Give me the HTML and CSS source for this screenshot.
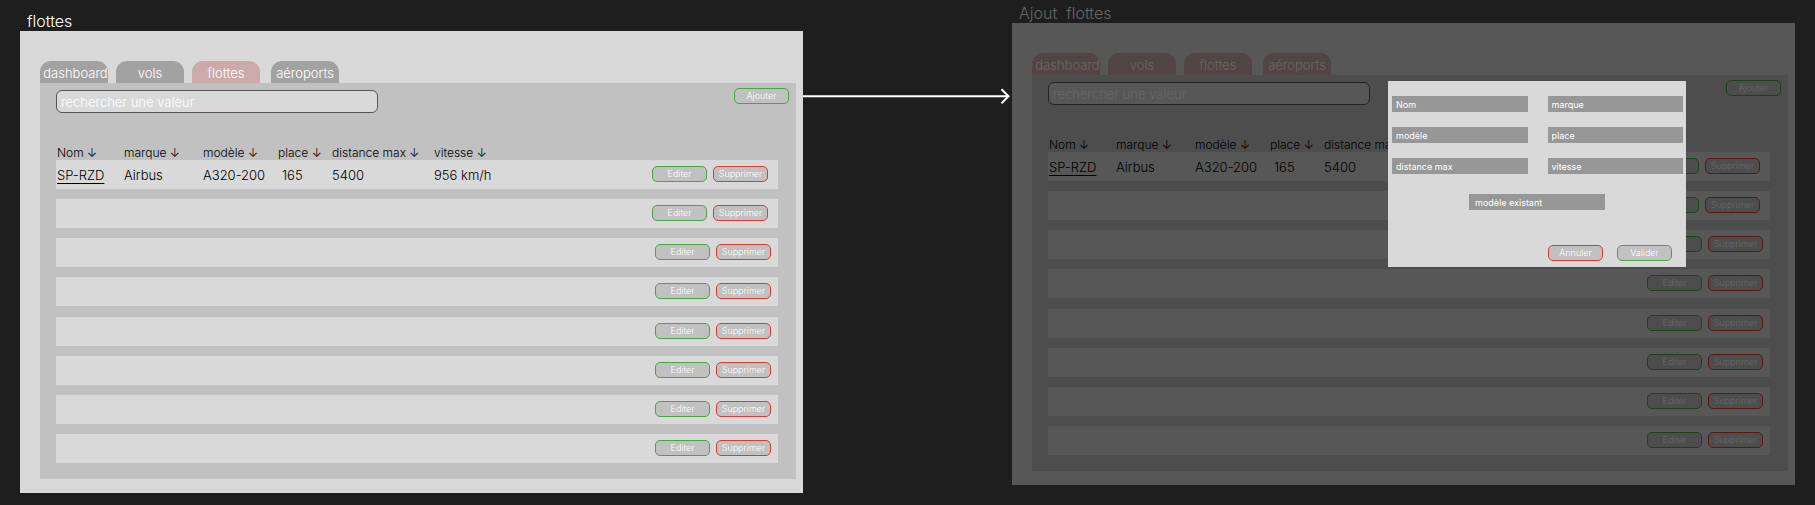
FILE: index.html
```html
<!DOCTYPE html>
<html lang="fr">
<head>
<meta charset="utf-8">
<title>Flottes</title>
<link rel="stylesheet" href="styles.css">
</head>
<body>
<main class="board">
  <section class="screen">
    <h2 class="screen-title">flottes</h2>
    <div class="frame">
      <nav class="tabs">
        <button class="tab tab-wide">dashboard</button>
        <button class="tab">vols</button>
        <button class="tab tab-active">flottes</button>
        <button class="tab tab-last">aéroports</button>
      </nav>
      <div class="panel">
        <div class="toolbar">
          <input class="search" type="search" placeholder="rechercher une valeur" aria-label="rechercher une valeur">
          <button class="btn btn-green">Ajouter</button>
        </div>
        <table class="fleet">
          <colgroup><col class="c-nom"><col class="c-marque"><col class="c-modele"><col class="c-place"><col class="c-distance"><col><col class="c-actions"></colgroup>
          <thead><tr><th>Nom ↓</th><th>marque ↓</th><th>modèle ↓</th><th>place ↓</th><th>distance max ↓</th><th>vitesse ↓</th><th></th></tr></thead>
          <tbody>
            <tr class="inset"><td><a class="plane" href="#">SP-RZD</a></td><td>Airbus</td><td>A320-200</td><td class="center">165</td><td>5400</td><td>956 km/h</td><td><div class="actions"><button class="btn btn-green">Editer</button><button class="btn btn-red">Supprimer</button></div></td></tr>
            <tr class="inset"><td colspan="6"></td><td><div class="actions"><button class="btn btn-green">Editer</button><button class="btn btn-red">Supprimer</button></div></td></tr>
            <tr><td colspan="6"></td><td><div class="actions"><button class="btn btn-green">Editer</button><button class="btn btn-red">Supprimer</button></div></td></tr>
            <tr><td colspan="6"></td><td><div class="actions"><button class="btn btn-green">Editer</button><button class="btn btn-red">Supprimer</button></div></td></tr>
          </tbody>
          <tbody>
            <tr><td colspan="6"></td><td><div class="actions"><button class="btn btn-green">Editer</button><button class="btn btn-red">Supprimer</button></div></td></tr>
            <tr><td colspan="6"></td><td><div class="actions"><button class="btn btn-green">Editer</button><button class="btn btn-red">Supprimer</button></div></td></tr>
            <tr><td colspan="6"></td><td><div class="actions"><button class="btn btn-green">Editer</button><button class="btn btn-red">Supprimer</button></div></td></tr>
            <tr><td colspan="6"></td><td><div class="actions"><button class="btn btn-green">Editer</button><button class="btn btn-red">Supprimer</button></div></td></tr>
          </tbody>
        </table>
      </div>
    </div>
  </section>

  <svg class="connector" width="209" height="16" viewBox="0 0 209 16" aria-hidden="true">
    <path d="M0 8.300H205M198.500 1.300L205.500 8.300L198.500 15.300" fill="none" stroke="#fff" stroke-width="2"/>
  </svg>

  <section class="screen screen-raised">
    <h2 class="screen-title title-dim">Ajout&nbsp; flottes</h2>
    <div class="frame">
      <nav class="tabs">
        <button class="tab tab-active tab-wide">dashboard</button>
        <button class="tab tab-active">vols</button>
        <button class="tab tab-active">flottes</button>
        <button class="tab tab-active tab-last">aéroports</button>
      </nav>
      <div class="panel">
        <div class="toolbar">
          <input class="search" type="search" placeholder="rechercher une valeur" aria-label="rechercher une valeur">
          <button class="btn btn-green">Ajouter</button>
        </div>
        <table class="fleet">
          <colgroup><col class="c-nom"><col class="c-marque"><col class="c-modele"><col class="c-place"><col class="c-distance"><col><col class="c-actions"></colgroup>
          <thead><tr><th>Nom ↓</th><th>marque ↓</th><th>modèle ↓</th><th>place ↓</th><th>distance max</th><th></th><th></th></tr></thead>
          <tbody>
            <tr class="inset"><td><a class="plane" href="#">SP-RZD</a></td><td>Airbus</td><td>A320-200</td><td class="center">165</td><td>5400</td><td></td><td><div class="actions"><button class="btn btn-green" aria-label="Editer"></button><button class="btn btn-red">Supprimer</button></div></td></tr>
            <tr class="inset"><td colspan="6"></td><td><div class="actions"><button class="btn btn-green" aria-label="Editer"></button><button class="btn btn-red">Supprimer</button></div></td></tr>
            <tr><td colspan="6"></td><td><div class="actions"><button class="btn btn-green" aria-label="Editer"></button><button class="btn btn-red">Supprimer</button></div></td></tr>
            <tr><td colspan="6"></td><td><div class="actions"><button class="btn btn-green">Editer</button><button class="btn btn-red">Supprimer</button></div></td></tr>
          </tbody>
          <tbody>
            <tr><td colspan="6"></td><td><div class="actions"><button class="btn btn-green">Editer</button><button class="btn btn-red">Supprimer</button></div></td></tr>
            <tr><td colspan="6"></td><td><div class="actions"><button class="btn btn-green">Editer</button><button class="btn btn-red">Supprimer</button></div></td></tr>
            <tr><td colspan="6"></td><td><div class="actions"><button class="btn btn-green">Editer</button><button class="btn btn-red">Supprimer</button></div></td></tr>
            <tr><td colspan="6"></td><td><div class="actions"><button class="btn btn-green">Editer</button><button class="btn btn-red">Supprimer</button></div></td></tr>
          </tbody>
        </table>
      </div>
      <div class="overlay"></div>
      <form class="modal">
        <div class="fields">
          <input class="field" placeholder="Nom" aria-label="Nom">
          <input class="field" placeholder="marque" aria-label="marque">
          <input class="field" placeholder="modèle" aria-label="modèle">
          <input class="field" placeholder="place" aria-label="place">
          <input class="field" placeholder="distance max" aria-label="distance max">
          <input class="field" placeholder="vitesse" aria-label="vitesse">
        </div>
        <input class="field field-existing" placeholder="modèle existant" aria-label="modèle existant">
        <div class="modal-actions">
          <button class="btn btn-red" type="button">Annuler</button>
          <button class="btn btn-green" type="button">Valider</button>
        </div>
      </form>
    </div>
  </section>
</main>
</body>
</html>
```
FILE: styles.css
```css
* { box-sizing: border-box; }

body {
  margin: 0;
  background: #1e1e1e;
  font-family: Inter, "Liberation Sans", sans-serif;
  font-weight: 300;
  color: #000;
}

button, input { font: inherit; color: #fff; margin: 0; }

.board {
  display: flex;
  align-items: flex-start;
  padding: 0 20px;
}

.screen { flex: 1 1 0; min-width: 0; padding-top: 11px; }
.screen-raised { padding-top: 3px; }

.screen-title {
  margin: 0;
  padding-left: 7px;
  font-size: 16px;
  line-height: 20px;
  font-weight: 300;
  color: #fff;
}
.title-dim { color: #666; }

.connector { flex: none; margin-top: 88px; }

.frame {
  position: relative;
  background: #d9d9d9;
  padding: 30px 7px 14px 20px;
}

.tabs { display: flex; gap: 8px; }
.tab {
  width: 68px;
  height: 22px;
  padding: 3px 0 0;
  border: 0;
  border-radius: 11px 11px 0 0;
  background: #a2a2a2;
  font-size: 13px;
  line-height: 19px;
  white-space: nowrap;
}
.tab-wide { padding-left: 3px; }
.tab-active { background: #ccaaaa; }
.tab-last { margin-left: 3px; }

.panel { background: #c1c1c1; padding: 5px 18px 6px 16px; }

.toolbar {
  display: flex;
  justify-content: space-between;
  align-items: flex-start;
  margin-right: -11px;
}
.search {
  width: 322px;
  height: 23px;
  margin-top: 2px;
  padding: 1px 4px 0;
  border: 1px solid #555;
  border-radius: 6px;
  background: #d9d9d9;
  font-size: 13px;
  appearance: none;
}
.search::placeholder, .field::placeholder { color: #fff; opacity: 1; }

.btn {
  width: 55px;
  height: 16px;
  padding: 0;
  border: 1px solid;
  border-radius: 5px;
  background: #c1c1c1;
  font-size: 9px;
  line-height: 14px;
}
.btn-green { border-color: #4aa344; }
.btn-red { border-color: #e03a30; }

.fleet {
  width: 100%;
  margin-top: 32px;
  table-layout: fixed;
  border-spacing: 0;
  white-space: nowrap;
}
.c-nom { width: 67px; }
.c-marque { width: 79px; }
.c-modele { width: 75px; }
.c-place { width: 54px; }
.c-distance { width: 102px; }
.c-actions { width: 140px; }

.fleet th {
  height: 15px;
  padding: 0 0 0 1px;
  font-size: 12px;
  line-height: 15px;
  font-weight: 300;
  text-align: left;
}
.fleet td {
  height: 39px;
  padding: 0 0 0 1px;
  border-bottom: 10px solid transparent;
  background: #d9d9d9;
  background-clip: padding-box;
  font-size: 13px;
  line-height: 20px;
}
.fleet .center { padding-left: 5px; }
.fleet tbody + tbody tr:first-child td { height: 40px; border-top: 1px solid transparent; }

.plane { color: inherit; text-underline-offset: 3px; }

.actions { display: flex; justify-content: flex-end; gap: 6px; padding: 0 7px 1px 0; }
.inset .actions { padding-right: 10px; }

.overlay { position: absolute; inset: 0; background: rgba(0, 0, 0, 0.6); }

.modal {
  position: absolute;
  top: 58px;
  right: 109px;
  width: 298px;
  padding: 15px 3px 6px 4px;
  background: #d9d9d9;
}
.fields { display: grid; grid-template-columns: 1fr 1fr; gap: 15px 20px; }
.field {
  width: 100%;
  height: 16px;
  padding: 0 4px;
  border: 0;
  border-radius: 0;
  background: #979797;
  font-size: 9px;
  font-weight: 400;
}
.field-existing { display: block; width: 136px; margin: 20px auto 0 77px; padding: 0 6px; }
.modal-actions { display: flex; justify-content: flex-end; gap: 14px; margin-top: 35px; padding-right: 11px; }
```
